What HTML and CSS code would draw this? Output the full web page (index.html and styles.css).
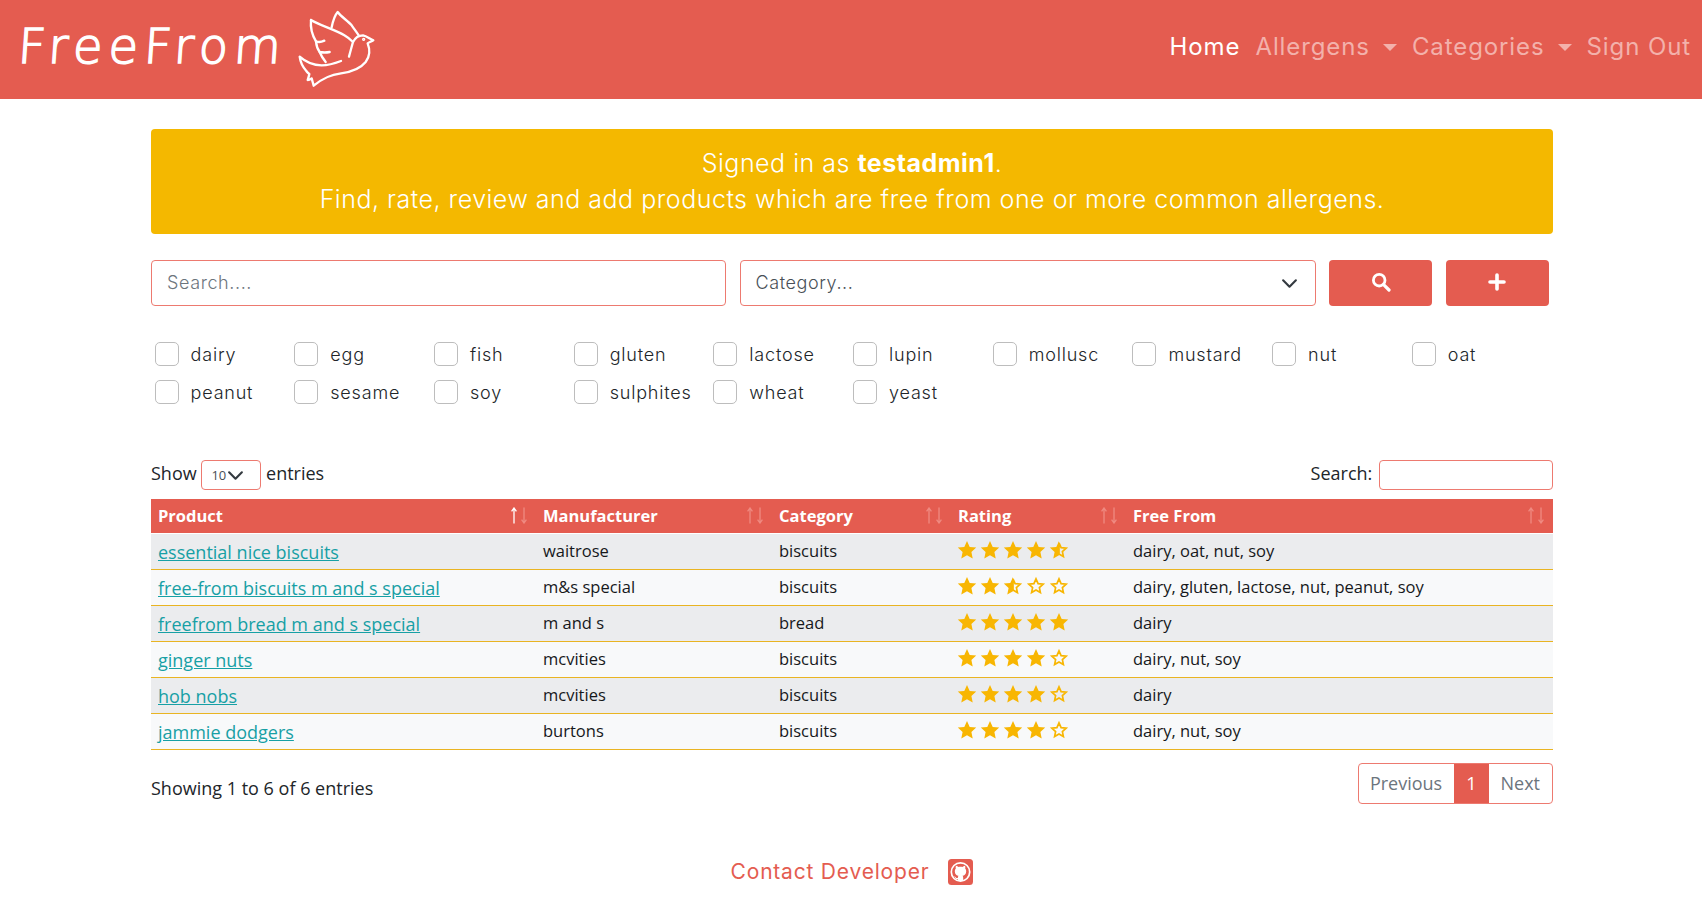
FILE: index.html
```html
<!DOCTYPE html>
<html lang="en">
<head>
  <meta charset="UTF-8">
  <meta name="viewport" content="width=device-width, initial-scale=1.0">
  <title>FreeFrom</title>
  <link rel="stylesheet" href="styles.css">
</head>
<body>

  <svg class="defs" width="0" height="0">
    <defs>
      <symbol id="star-full" viewBox="0 0 20 20">
        <polygon points="10,1 12.7,6.9 19.2,7.6 14.4,12 15.7,18.4 10,15.2 4.3,18.4 5.6,12 0.8,7.6 7.3,6.9" fill="#f8b602"/>
      </symbol>
      <symbol id="star-empty" viewBox="0 0 20 20">
        <polygon points="10,2.8 12.1,7.6 17.2,8.2 13.4,11.6 14.4,16.6 10,14.1 5.6,16.6 6.6,11.6 2.8,8.2 7.9,7.6" fill="none" stroke="#f8b602" stroke-width="1.7"/>
      </symbol>
      <symbol id="star-half" viewBox="0 0 20 20">
        <polygon points="10,2.8 12.1,7.6 17.2,8.2 13.4,11.6 14.4,16.6 10,14.1" fill="none" stroke="#f8b602" stroke-width="1.7"/>
        <polygon points="10,1 10,15.2 4.3,18.4 5.6,12 0.8,7.6 7.3,6.9" fill="#f8b602"/>
      </symbol>
      <symbol id="arrow-up" viewBox="0 0 6 17">
        <path d="M3 16.5V1M0.6 4.4L3 1l2.4 3.4" fill="none" stroke="currentColor" stroke-width="1.3"/>
      </symbol>
      <symbol id="arrow-down" viewBox="0 0 6 17">
        <path d="M3 0.5V16M0.6 12.6L3 16l2.4-3.4" fill="none" stroke="currentColor" stroke-width="1.3"/>
      </symbol>
    </defs>
  </svg>

  <nav class="navbar">
    <a class="brand" href="#">
      <span class="brand-text">FreeFrom</span>
      <svg class="dove" viewBox="0 0 330 300" fill="none" stroke="#fff" stroke-width="7" stroke-linecap="round" stroke-linejoin="round">
        <path d="M152 82 C156 62 162 45 170 36 C180 50 200 62 212 76 C220 88 228 98 233 106"/>
        <path d="M90 60 C120 78 160 88 190 106 C202 113 210 120 216 126 C212 140 208 155 204 170"/>
        <path d="M216 126 C222 114 232 106 246 106 C256 108 266 116 277 121 C270 125 264 127 260 130 C268 150 266 170 254 186 C238 206 210 216 180 220 C150 224 128 232 98 257 C96 250 94 242 92 235 C88 238 84 240 80 240 C82 234 84 228 85 222 C82 220 78 216 76 213 C66 202 58 186 56 170 C74 186 96 196 122 196 C142 196 162 190 180 183"/>
        <path d="M90 60 C88 80 94 106 105 124 C114 128 122 126 130 122"/>
        <path d="M105 124 C106 136 110 148 116 156 C126 158 136 158 146 156"/>
        <path d="M116 156 C120 166 126 176 134 186"/>
        <circle cx="248" cy="118" r="3" stroke-width="4"/>
      </svg>
    </a>
    <ul class="nav-links">
      <li><a class="active" href="#">Home</a></li>
      <li><a class="caret" href="#">Allergens</a></li>
      <li><a class="caret" href="#">Categories</a></li>
      <li><a href="#">Sign Out</a></li>
    </ul>
  </nav>

  <main class="container">
    <div class="banner">
      <p>Signed in as <strong>testadmin1</strong>.</p>
      <p>Find, rate, review and add products which are free from one or more common allergens.</p>
    </div>

    <form class="search-form">
      <input class="field" type="text" placeholder="Search....">
      <select class="field field-select">
        <option>Category...</option>
      </select>
      <button class="btn" type="button" aria-label="Search">
        <svg width="20" height="20" viewBox="0 0 20 20" fill="none" stroke="#fff">
          <circle cx="8.2" cy="8.2" r="5.8" stroke-width="2.8"/>
          <line x1="12.6" y1="12.6" x2="18" y2="18" stroke-width="3.2" stroke-linecap="round"/>
        </svg>
      </button>
      <button class="btn" type="button" aria-label="Add">
        <svg width="18" height="18" viewBox="0 0 18 18" stroke="#fff" stroke-width="3.6" stroke-linecap="round">
          <line x1="9" y1="2" x2="9" y2="16"/>
          <line x1="2" y1="9" x2="16" y2="9"/>
        </svg>
      </button>
    </form>

    <div class="allergens">
      <label class="check"><input type="checkbox">dairy</label>
      <label class="check"><input type="checkbox">egg</label>
      <label class="check"><input type="checkbox">fish</label>
      <label class="check"><input type="checkbox">gluten</label>
      <label class="check"><input type="checkbox">lactose</label>
      <label class="check"><input type="checkbox">lupin</label>
      <label class="check"><input type="checkbox">mollusc</label>
      <label class="check"><input type="checkbox">mustard</label>
      <label class="check"><input type="checkbox">nut</label>
      <label class="check"><input type="checkbox">oat</label>
      <label class="check"><input type="checkbox">peanut</label>
      <label class="check"><input type="checkbox">sesame</label>
      <label class="check"><input type="checkbox">soy</label>
      <label class="check"><input type="checkbox">sulphites</label>
      <label class="check"><input type="checkbox">wheat</label>
      <label class="check"><input type="checkbox">yeast</label>
    </div>

    <div class="table-top">
      <label class="length">Show
        <select class="small-select"><option>10</option></select>
        entries</label>
      <label class="filter">Search: <input class="small-input" type="text"></label>
    </div>

    <table class="products">
      <colgroup>
        <col class="col-product">
        <col class="col-manufacturer">
        <col class="col-category">
        <col class="col-rating">
        <col>
      </colgroup>
      <thead>
        <tr>
          <th>Product<span class="sort sort-asc"><svg><use href="#arrow-up"/></svg><svg><use href="#arrow-down"/></svg></span></th>
          <th>Manufacturer<span class="sort"><svg><use href="#arrow-up"/></svg><svg><use href="#arrow-down"/></svg></span></th>
          <th>Category<span class="sort"><svg><use href="#arrow-up"/></svg><svg><use href="#arrow-down"/></svg></span></th>
          <th>Rating<span class="sort"><svg><use href="#arrow-up"/></svg><svg><use href="#arrow-down"/></svg></span></th>
          <th>Free From<span class="sort"><svg><use href="#arrow-up"/></svg><svg><use href="#arrow-down"/></svg></span></th>
        </tr>
      </thead>
      <tbody>
        <tr>
          <td><a href="#">essential nice biscuits</a></td>
          <td>waitrose</td>
          <td>biscuits</td>
          <td><span class="stars"><svg><use href="#star-full"/></svg><svg><use href="#star-full"/></svg><svg><use href="#star-full"/></svg><svg><use href="#star-full"/></svg><svg><use href="#star-half"/></svg></span></td>
          <td>dairy, oat, nut, soy</td>
        </tr>
        <tr>
          <td><a href="#">free-from biscuits m and s special</a></td>
          <td>m&amp;s special</td>
          <td>biscuits</td>
          <td><span class="stars"><svg><use href="#star-full"/></svg><svg><use href="#star-full"/></svg><svg><use href="#star-half"/></svg><svg><use href="#star-empty"/></svg><svg><use href="#star-empty"/></svg></span></td>
          <td>dairy, gluten, lactose, nut, peanut, soy</td>
        </tr>
        <tr>
          <td><a href="#">freefrom bread m and s special</a></td>
          <td>m and s</td>
          <td>bread</td>
          <td><span class="stars"><svg><use href="#star-full"/></svg><svg><use href="#star-full"/></svg><svg><use href="#star-full"/></svg><svg><use href="#star-full"/></svg><svg><use href="#star-full"/></svg></span></td>
          <td>dairy</td>
        </tr>
        <tr>
          <td><a href="#">ginger nuts</a></td>
          <td>mcvities</td>
          <td>biscuits</td>
          <td><span class="stars"><svg><use href="#star-full"/></svg><svg><use href="#star-full"/></svg><svg><use href="#star-full"/></svg><svg><use href="#star-full"/></svg><svg><use href="#star-empty"/></svg></span></td>
          <td>dairy, nut, soy</td>
        </tr>
        <tr>
          <td><a href="#">hob nobs</a></td>
          <td>mcvities</td>
          <td>biscuits</td>
          <td><span class="stars"><svg><use href="#star-full"/></svg><svg><use href="#star-full"/></svg><svg><use href="#star-full"/></svg><svg><use href="#star-full"/></svg><svg><use href="#star-empty"/></svg></span></td>
          <td>dairy</td>
        </tr>
        <tr>
          <td><a href="#">jammie dodgers</a></td>
          <td>burtons</td>
          <td>biscuits</td>
          <td><span class="stars"><svg><use href="#star-full"/></svg><svg><use href="#star-full"/></svg><svg><use href="#star-full"/></svg><svg><use href="#star-full"/></svg><svg><use href="#star-empty"/></svg></span></td>
          <td>dairy, nut, soy</td>
        </tr>
      </tbody>
    </table>

    <div class="table-bottom">
      <div class="info">Showing 1 to 6 of 6 entries</div>
      <ul class="pagination">
        <li><a href="#">Previous</a></li>
        <li class="current"><a href="#">1</a></li>
        <li><a href="#">Next</a></li>
      </ul>
    </div>
  </main>

  <footer class="footer">
    <a href="#">Contact Developer</a>
    <svg class="github" viewBox="0 0 25 26">
      <rect width="25" height="26" rx="3.5" fill="#e45c50"/>
      <circle cx="12.5" cy="13" r="9.2" fill="none" stroke="#fff" stroke-width="1.7"/>
      <path fill="#fff" d="M8 6.8 C9 6.9 9.9 7.4 10.6 8 C11.8 7.7 13.2 7.7 14.4 8 C15.1 7.4 16 6.9 17 6.8 C17.4 7.8 17.5 8.7 17.2 9.5 C17.9 10.3 18.2 11.2 18.2 12.2 C18.2 15.2 16.4 16.5 14.5 16.8 C15 17.3 15.2 17.9 15.2 18.7 L15.2 22 L9.8 22 L9.8 20 C8.4 20.3 7.6 19.6 7 18.5 C6.7 18 6.3 17.7 5.9 17.5 C6.8 17.3 7.4 17.8 7.9 18.5 C8.4 19.1 9 19.2 9.8 18.9 C9.9 18 10 17.3 10.5 16.8 C8.6 16.5 6.8 15.2 6.8 12.2 C6.8 11.2 7.1 10.3 7.8 9.5 C7.5 8.7 7.6 7.8 8 6.8 Z"/>
    </svg>
  </footer>

</body>
</html>
```

FILE: styles.css
```css
body {
  margin: 0;
  background-color: #fff;
  color: #212529;
  font-family: "Open Sans", sans-serif;
  font-size: 18px;
}

a {
  text-decoration: none;
}

.defs {
  display: block;
  height: 0;
}

/* navbar */

.navbar {
  display: flex;
  justify-content: space-between;
  align-items: center;
  height: 99px;
  padding: 0 11px 0 18px;
  background-color: #e45c50;
}

.brand {
  display: flex;
  align-items: center;
  gap: 16px;
  color: #fff;
}

.brand-text {
  padding-bottom: 8px;
  font-family: "DejaVu Sans", sans-serif;
  font-size: 48px;
  font-weight: 200;
  letter-spacing: 6px;
  transform: skewX(-4deg);
  -webkit-text-stroke: 1.5px #fff;
}

.dove {
  width: 110px;
  height: 100px;
  margin-left: -22px;
}

.nav-links {
  display: flex;
  gap: 15px;
  margin: 0;
  padding: 0 0 6px;
  list-style: none;
  font-family: "Inter", sans-serif;
  font-size: 24px;
  letter-spacing: 0.9px;
}

.nav-links a {
  color: #f3b1ab;
}

.nav-links a.active {
  color: #fff;
}

.caret::after {
  content: "";
  display: inline-block;
  margin-left: 13px;
  vertical-align: 4px;
  border-top: 7px solid #f3b1ab;
  border-left: 7px solid transparent;
  border-right: 7px solid transparent;
}

/* main */

.container {
  width: 1402px;
  margin: 0 149px 0 151px;
}

.banner {
  margin-top: 30px;
  padding: 16px 0 17px;
  border-radius: 4px;
  background-color: #f4b800;
  color: #fff;
  font-family: "Inter", sans-serif;
  font-size: 25px;
  font-weight: 300;
  letter-spacing: 0.5px;
  line-height: 36px;
  text-align: center;
}

.banner p {
  margin: 0;
}

.banner strong {
  font-weight: 700;
}

.search-form {
  display: grid;
  grid-template-columns: 575px 576px 103px 103px;
  gap: 14px 13.5px;
  margin-top: 26px;
}

.field {
  height: 46px;
  padding: 0 15px 2px;
  border: 1px solid #ed7a70;
  border-radius: 4px;
  box-sizing: border-box;
  background-color: #fff;
  color: #495057;
  font-family: "Inter", sans-serif;
  font-size: 18px;
  font-weight: 300;
  letter-spacing: 0.6px;
}

.field::placeholder {
  color: #6c757d;
}

.field-select,
.small-select {
  appearance: none;
  background-image: url("data:image/svg+xml,%3Csvg xmlns='http://www.w3.org/2000/svg' viewBox='0 0 16 16'%3E%3Cpath fill='none' stroke='%23343a40' stroke-linecap='round' stroke-linejoin='round' stroke-width='2' d='M2 5l6 6 6-6'/%3E%3C/svg%3E");
  background-repeat: no-repeat;
  background-position: right 15px center;
  background-size: 21px 17px;
}

.btn {
  display: flex;
  justify-content: center;
  align-items: center;
  height: 46px;
  padding: 0 0 2px;
  border: none;
  border-radius: 4px;
  background-color: #e45c50;
  cursor: pointer;
}

.allergens {
  display: grid;
  grid-template-columns: repeat(10, 139.7px);
  grid-auto-rows: 38px;
  margin-top: 29px;
  font-family: "Inter", sans-serif;
  font-size: 18px;
  font-weight: 300;
  letter-spacing: 0.8px;
}

.check {
  display: flex;
  align-items: center;
  padding-left: 3.6px;
  color: #212529;
}

.check input {
  appearance: none;
  width: 24px;
  height: 24px;
  margin: 0 12px 0 0;
  border: 1px solid #bdbdbd;
  border-radius: 5px;
  background-color: #fff;
}

/* datatable */

.table-top {
  display: flex;
  justify-content: space-between;
  align-items: center;
  height: 30px;
  margin-top: 49px;
}

.small-select {
  width: 60px;
  height: 30px;
  margin: 0;
  padding: 0 0 0 9px;
  border: 1px solid #ed7a70;
  border-radius: 4px;
  background-color: #fff;
  background-position: left 23px center;
  color: #495057;
  font-family: "Open Sans", sans-serif;
  font-size: 13px;
  letter-spacing: 0;
  vertical-align: middle;
}

.small-input {
  width: 174px;
  height: 30px;
  margin-left: 2px;
  border: 1px solid #ed7a70;
  border-radius: 4px;
  box-sizing: border-box;
  vertical-align: middle;
}

.products {
  width: 100%;
  margin-top: 9px;
  border-collapse: collapse;
  table-layout: fixed;
}

.col-product { width: 385px; }
.col-manufacturer { width: 236px; }
.col-category { width: 179px; }
.col-rating { width: 175px; }

.products th {
  height: 34px;
  padding: 0 7px;
  box-sizing: border-box;
  border-bottom: 1px solid #fff;
  background-color: #e45c50;
  color: #fff;
  font-size: 16.5px;
  font-weight: 700;
  text-align: left;
}

.sort {
  float: right;
  display: flex;
  gap: 4px;
  margin: 3px 2px 0 0;
  color: #ef8a81;
}

.sort svg {
  display: block;
  width: 6px;
  height: 17px;
}

.sort-asc svg:first-child {
  color: #fff;
}

.products td {
  height: 36px;
  padding: 0 7px 2px;
  box-sizing: border-box;
  border-bottom: 1px solid #e9b422;
  color: #16181b;
  font-size: 16.5px;
}

.products tbody td:first-child {
  padding: 2px 7px 0;
}

.products tbody tr:nth-child(odd) {
  background-color: #ebecee;
}

.products tbody tr:nth-child(even) {
  background-color: #f8f9fa;
}

.products td a {
  color: #17a0a5;
  font-size: 18px;
  text-decoration: underline;
}

.stars {
  display: flex;
  gap: 3px;
  margin-left: -1px;
}

.stars svg {
  width: 20px;
  height: 20px;
}

.table-bottom {
  display: flex;
  justify-content: space-between;
  align-items: center;
  margin-top: 13px;
}

.info {
  padding-top: 9px;
}

.pagination {
  display: flex;
  height: 41px;
  margin: 0;
  padding: 0;
  border: 1px solid #ed7a70;
  border-radius: 4px;
  box-sizing: border-box;
  list-style: none;
}

.pagination a {
  display: block;
  padding: 0 12px;
  color: #6c757d;
  line-height: 39px;
}

.pagination li:first-child a {
  padding-left: 11px;
}

.pagination .current a {
  background-color: #e45c50;
  color: #fff;
}

.footer {
  display: flex;
  justify-content: center;
  align-items: center;
  gap: 19px;
  margin-top: 55px;
  padding-left: 2px;
  font-family: "Inter", sans-serif;
  font-size: 21px;
  letter-spacing: 0.8px;
}

.footer a {
  color: #e45c50;
}

.github {
  width: 25px;
  height: 26px;
}
```
